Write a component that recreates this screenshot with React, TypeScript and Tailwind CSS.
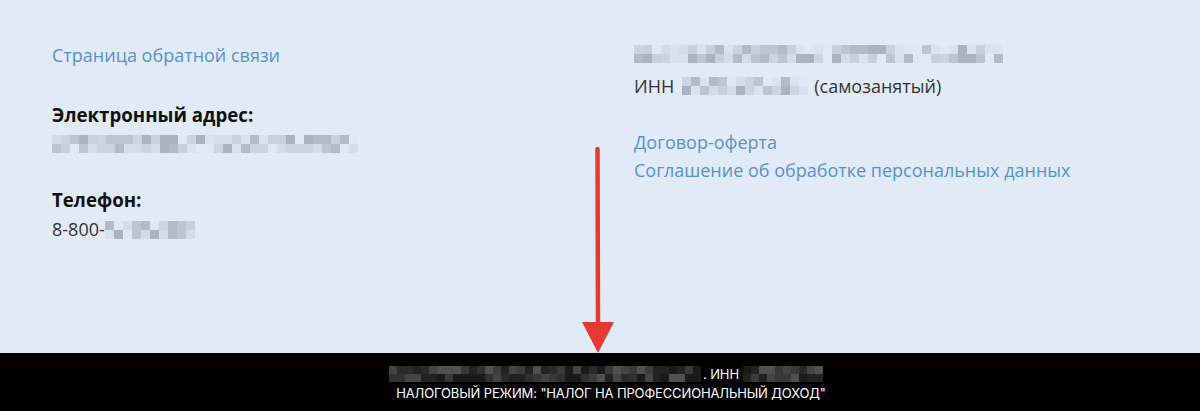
const light = ['#dfe8f3', '#d3dce8', '#c7d0dc', '#bcc5d1', '#b2bbc7', '#aab3bf', '#d9e2ee', '#cbd4e0']
const dark = ['#1a1a1a', '#2a2a2a', '#383838', '#444', '#505050', '#222', '#303030', '#3c3c3c']

function Pixelated({ width, rows = 2, cell = 9, tone = 'light', seed = 1 }: { width: number; rows?: number; cell?: number; tone?: 'light' | 'dark'; seed?: number }) {
  const cols = Math.round(width / cell)
  const palette = tone === 'light' ? light : dark
  let s = seed * 9301 + 49297
  const next = () => {
    s = (s * 9301 + 49297) % 233280
    return s / 233280
  }
  return (
    <span className="inline-flex flex-col align-middle">
      {Array.from({ length: rows }).map((_, r) => (
        <span key={r} className="flex">
          {Array.from({ length: cols }).map((_, c) => (
            <span
              key={c}
              style={{ width: cell, height: cell, background: palette[Math.floor(next() * palette.length)] }}
            />
          ))}
        </span>
      ))}
    </span>
  )
}

export default function App() {
  return (
    <div className="relative w-[1200px] h-[411px] flex flex-col bg-[#e1ebf7] font-['Open_Sans',sans-serif] text-[18px] text-[#333]">
      <div className="flex-1 grid grid-cols-[582px_1fr] pl-[52px]">
        <div className="flex flex-col pt-[40px]">
          <a className="text-[#5592cc] leading-[30px]">Страница обратной связи</a>
          <div className="mt-[30px] font-bold text-[18.7px] text-[#111] leading-[30px]">Электронный адрес:</div>
          <div className="flex h-[28px] items-center">
            <Pixelated width={306} seed={3} />
          </div>
          <div className="mt-[27px] font-bold text-[18.7px] text-[#111] leading-[30px]">Телефон:</div>
          <div className="flex items-center leading-[29px]">
            <span>8-800-</span>
            <Pixelated width={90} seed={7} />
          </div>
        </div>
        <div className="flex flex-col pt-[40px]">
          <div className="flex h-[28px] items-center">
            <Pixelated width={372} seed={11} />
          </div>
          <div className="flex items-center leading-[30px] mt-[3px]">
            <span>ИНН</span>
            <span className="ml-[8px] mr-[6px] flex">
              <Pixelated width={126} seed={5} />
            </span>
            <span>(самозанятый)</span>
          </div>
          <a className="mt-[27px] text-[#5592cc] leading-[28px]">Договор-оферта</a>
          <a className="text-[#5592cc] leading-[28px]">Соглашение об обработке персональных данных</a>
        </div>
      </div>
      <footer className="h-[58px] bg-black flex flex-col items-center justify-center text-white font-['Inter',sans-serif] text-[13px] tracking-[-0.01em] leading-[19px] pt-[3px] pl-[12px]">
        <div className="flex items-center">
          <Pixelated width={312} rows={2} cell={8} tone="dark" seed={2} />
          <span className="ml-[2px] mr-[4px]">. ИНН</span>
          <Pixelated width={82} rows={2} cell={8} tone="dark" seed={4} />
        </div>
        <div className="uppercase pl-[10px]">НАЛОГОВЫЙ РЕЖИМ: "НАЛОГ НА ПРОФЕССИОНАЛЬНЫЙ ДОХОД"</div>
      </footer>
      <svg className="absolute left-[578px] top-[144px]" width="40" height="212" viewBox="0 0 40 212">
        <line x1="19.5" y1="5" x2="20" y2="182" stroke="#e53a31" strokeWidth="4.5" strokeLinecap="round" />
        <path d="M4 178 L36 178 L20 209 Z" fill="#e53a31" />
      </svg>
    </div>
  )
}
